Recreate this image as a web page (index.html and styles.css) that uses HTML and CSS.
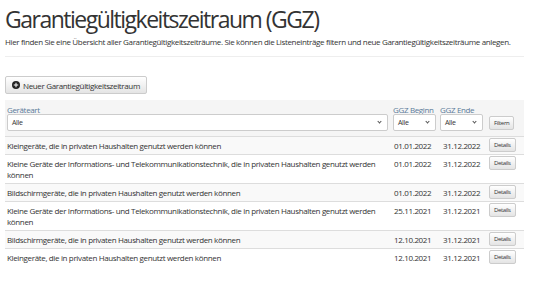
FILE: index.html
```html
<!DOCTYPE html>
<html lang="de">
<head>
    <meta charset="UTF-8">
    <title>Garantiegültigkeitszeitraum (GGZ)</title>
    <link rel="stylesheet" href="styles.css">
</head>
<body>
    <div class="page">
        <h1>Garantiegültigkeitszeitraum (GGZ)</h1>
        <p class="intro">Hier finden Sie eine Übersicht aller Garantiegültigkeitszeiträume. Sie können die Listeneinträge filtern und neue Garantiegültigkeitszeiträume anlegen.</p>
        <hr>

        <button class="btn btn-new">
            <svg class="icon" viewBox="0 0 16 16" width="8" height="8">
                <circle cx="8" cy="8" r="8" fill="#222"/>
                <rect x="7" y="3.5" width="2" height="9" fill="#fff"/>
                <rect x="3.5" y="7" width="9" height="2" fill="#fff"/>
            </svg>
            Neuer Garantiegültigkeitszeitraum
        </button>

        <table class="list">
            <thead>
                <tr>
                    <th class="col-type">
                        <label>Geräteart</label>
                        <div class="select wide">Alle <span class="caret"></span></div>
                    </th>
                    <th class="col-date">
                        <label>GGZ Beginn</label>
                        <div class="select">Alle <span class="caret"></span></div>
                    </th>
                    <th class="col-date">
                        <label>GGZ Ende</label>
                        <div class="select">Alle <span class="caret"></span></div>
                    </th>
                    <th class="col-action">
                        <button class="btn btn-small">Filtern</button>
                    </th>
                </tr>
            </thead>
            <tbody>
                <tr>
                    <td>Kleingeräte, die in privaten Haushalten genutzt werden können</td>
                    <td>01.01.2022</td>
                    <td>31.12.2022</td>
                    <td><button class="btn btn-small">Details</button></td>
                </tr>
                <tr>
                    <td>Kleine Geräte der Informations- und Telekommunikationstechnik, die in privaten Haushalten genutzt werden können</td>
                    <td>01.01.2022</td>
                    <td>31.12.2022</td>
                    <td><button class="btn btn-small">Details</button></td>
                </tr>
                <tr>
                    <td>Bildschirmgeräte, die in privaten Haushalten genutzt werden können</td>
                    <td>01.01.2022</td>
                    <td>31.12.2022</td>
                    <td><button class="btn btn-small">Details</button></td>
                </tr>
                <tr>
                    <td>Kleine Geräte der Informations- und Telekommunikationstechnik, die in privaten Haushalten genutzt werden können</td>
                    <td>25.11.2021</td>
                    <td>31.12.2021</td>
                    <td><button class="btn btn-small">Details</button></td>
                </tr>
                <tr>
                    <td>Bildschirmgeräte, die in privaten Haushalten genutzt werden können</td>
                    <td>12.10.2021</td>
                    <td>31.12.2021</td>
                    <td><button class="btn btn-small">Details</button></td>
                </tr>
                <tr>
                    <td>Kleingeräte, die in privaten Haushalten genutzt werden können</td>
                    <td>12.10.2021</td>
                    <td>31.12.2021</td>
                    <td><button class="btn btn-small">Details</button></td>
                </tr>
            </tbody>
        </table>
    </div>
</body>
</html>
```

FILE: styles.css
```css
* {
    margin: 0;
    padding: 0;
    box-sizing: border-box;
}
body {
    background: white;
    color: #333;
    font-family: "Open Sans", sans-serif;
    font-size: 8px;
    letter-spacing: -0.35px;
}
.page {
    width: 524px;
    padding-left: 5px;
}
h1 {
    font-size: 23px;
    font-weight: 400;
    line-height: 30px;
    letter-spacing: -1.5px;
    margin-top: 4px;
}
.intro {
    font-size: 8px;
    line-height: 11px;
    margin-top: 2px;
}
hr {
    border: none;
    border-top: 1px solid #eee;
    margin: 9px 0 19px;
}
.btn {
    font-family: inherit;
    letter-spacing: inherit;
    color: #333;
    background: linear-gradient(#fff, #e4e4e4);
    border: 1px solid #ccc;
    border-radius: 2px;
    cursor: pointer;
}
.btn-new {
    font-size: 8px;
    height: 18px;
    padding: 0 6px;
    display: flex;
    align-items: center;
    gap: 3px;
}
.list {
    width: 519px;
    border-collapse: collapse;
    table-layout: fixed;
    margin-top: 6px;
}
.list th {
    background: #f5f5f5;
    font-weight: 400;
    text-align: left;
    vertical-align: bottom;
    padding: 5px 2px;
    white-space: nowrap;
}
.list th label {
    display: block;
    color: #5a7a99;
    font-size: 8px;
    line-height: 9px;
}
.select {
    height: 17px;
    border: 1px solid #ccc;
    border-radius: 2px;
    background: white;
    font-size: 7px;
    line-height: 15px;
    padding: 0 4px;
    position: relative;
    width: 43px;
}
.select.wide {
    width: 381px;
}
.caret {
    position: absolute;
    right: 6px;
    top: 5px;
    width: 3px;
    height: 3px;
    border-right: 1.2px solid #555;
    border-bottom: 1.2px solid #555;
    transform: rotate(45deg);
}
.col-type {
    width: 384px;
}
.col-date {
    width: 49px;
}
.col-date:nth-child(2) {
    padding-left: 4px;
}
.col-action {
    width: 37px;
}
.list td {
    border-top: 1px solid #ddd;
    padding: 3px 2px;
    line-height: 11px;
    vertical-align: top;
    font-size: 8px;
}
.list td:nth-child(2), .list td:nth-child(3) {
    padding-left: 5px;
}
.list tbody tr:nth-child(odd) td {
    background: #f9f9f9;
}
.btn-small {
    font-size: 6px;
    height: 14px;
    padding: 0 4px;
}
.list td .btn-small {
    margin: -2px 0 -1px;
    display: block;
}
.list th .btn-small {
    margin-bottom: 1px;
}
```
